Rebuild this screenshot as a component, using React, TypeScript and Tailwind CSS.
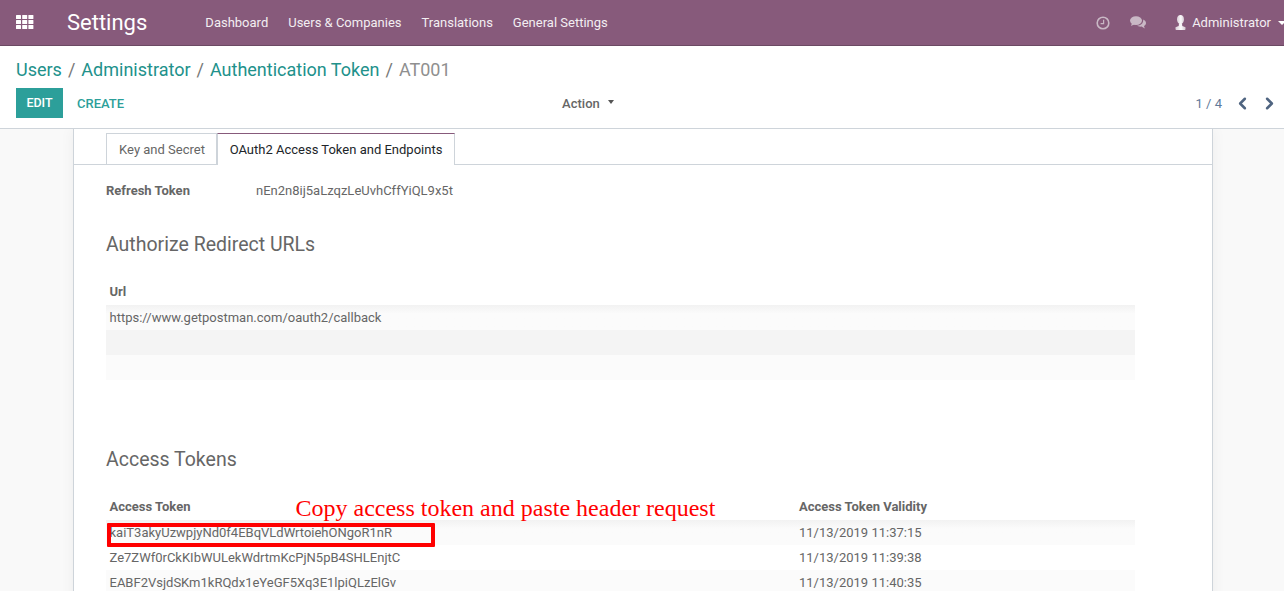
import React from "react";
import { ChevronLeft, ChevronRight } from "lucide-react";

const Grid = () => (
  <svg width="18" height="15" viewBox="0 0 18 15" fill="#fff">
    {[0, 5, 10].map((y) =>
      [0, 6.2, 12.4].map((x) => <rect key={`${x}-${y}`} x={x} y={y} width="5" height="4" rx="0.5" />)
    )}
  </svg>
);

const Clock = () => (
  <svg width="14" height="14" viewBox="0 0 14 14" fill="none" stroke="#c9b8c5" strokeWidth="1.6">
    <circle cx="7" cy="7" r="5.8" />
    <path d="M7.6 3.8V7.6H4.6" strokeWidth="1.2" />
  </svg>
);

const Chat = () => (
  <svg width="16" height="13" viewBox="0 0 16 13" fill="#c9b8c5">
    <ellipse cx="6" cy="4.6" rx="6" ry="4.4" />
    <path d="M2 7l-1 3 4-2z" />
    <path d="M13.2 3.6C15 4.4 16 5.6 16 7c0 1.2-.8 2.300-2 3l.8 2.600-3.300-2C9.500 10.800 8 10.400 7 9.800c3.500 0 6.600-2.300 6.200-6.200z" />
  </svg>
);

const Person = () => (
  <svg width="11" height="15" viewBox="0 0 11 15">
    <defs>
      <linearGradient id="bust" x1="0" y1="0" x2="1" y2="0">
        <stop offset="0" stopColor="#d9ced6" />
        <stop offset="0.55" stopColor="#fbfafb" />
        <stop offset="1" stopColor="#d4c8d1" />
      </linearGradient>
    </defs>
    <path d="M5.500 0C7.800 0 9 1.900 9 4.300 9 6.900 7.400 9.200 5.500 9.200S2 6.900 2 4.300C2 1.900 3.200 0 5.500 0z" fill="url(#bust)" />
    <path d="M4 8.600h3l.3 2.400 3.200 1.300V14c0 .6-.5 1-1 1h-8c-.5 0-1-.4-1-1v-1.700L3.700 11z" fill="url(#bust)" />
  </svg>
);

const Row = ({ tone, a, b }: { tone: string; a?: string; b?: string }) => (
  <div className={`flex h-[25px] items-center pl-[3.500px] ${tone}`}>
    <span className="w-[689.500px] shrink-0">{a}</span>
    <span>{b}</span>
  </div>
);

export default function App() {
  return (
    <div className="flex h-[591px] flex-col overflow-hidden bg-white font-['Roboto',sans-serif] text-[13px] text-[#4c4c4c]">
      <header className="flex h-[46px] shrink-0 items-center border-b border-[#6b4a63] bg-[#875a7b] text-white">
        <div className="ml-[16px] flex w-[51px] items-center"><Grid /></div>
        <span className="mr-[58px] text-[22px] leading-none">Settings</span>
        <nav className="flex gap-[20px] text-[13px] text-[#f3eef2]">
          <span>Dashboard</span>
          <span>Users &amp; Companies</span>
          <span>Translations</span>
          <span>General Settings</span>
        </nav>
        <div className="ml-auto -mr-[2px] flex items-center text-[#f3eef2]">
          <Clock />
          <span className="ml-[20px] mr-[29px]"><Chat /></span>
          <Person />
          <span className="ml-[6px] mr-[7px]">Administrator</span>
          <span className="h-0 w-0 border-x-[4px] border-t-[4px] border-x-transparent border-t-white" />
        </div>
      </header>

      <section className="h-[83px] shrink-0 border-b border-[#ced4da] pl-[16px]">
        <div className="flex h-[42px] items-end gap-[6px] pb-[5px] text-[18px] leading-[26px]">
          <span className="text-[#21918b]">Users</span>
          <span className="text-[#777]">/</span>
          <span className="text-[#21918b]">Administrator</span>
          <span className="text-[#777]">/</span>
          <span className="text-[#21918b]">Authentication Token</span>
          <span className="text-[#777]">/</span>
          <span className="text-[#8f8f8f]">AT001</span>
        </div>
        <div className="flex items-center">
          <span className="flex h-[30px] w-[47px] items-center justify-center bg-[#2c9f9a] pt-[1px] text-[12.500px] font-medium text-white">EDIT</span>
          <span className="ml-[14px] pt-[1px] text-[13px] font-medium text-[#2c9f9a]">CREATE</span>
          <span className="ml-[438px] pt-[1px] text-[13px] font-medium text-[#666]">Action</span>
          <span className="mb-[3px] ml-[8px] h-0 w-0 border-x-[3.500px] border-t-[4px] border-x-transparent border-t-[#555]" />
          <span className="ml-auto pt-[1px] text-[#5f7a99]">1 / 4</span>
          <ChevronLeft className="ml-[11px] text-[#4f6480]" size={19} strokeWidth={3.2} />
          <ChevronRight className="ml-[8px] mr-[5px] text-[#4f6480]" size={19} strokeWidth={3.2} />
        </div>
      </section>

      <main className="flex flex-1 overflow-hidden bg-[#f9f9f9] pl-[73px]">
        <div className="relative h-[600px] w-[1140px] shrink-0 border-x border-[#ced4da] bg-white shadow-[0_0_14px_rgba(0,0,0,0.05)]">
          <div className="flex h-[36px] items-end border-b border-[#ced4da] pl-[32px] pt-[4px]">
            <span className="-mb-px flex h-[32px] w-[111px] items-center justify-center border border-b-0 border-[#ced4da] pl-[1px] text-[#666]">Key and Secret</span>
            <span className="-mb-px flex h-[32px] w-[238px] items-center justify-center border border-b-0 border-[#ced4da] border-t-[#875a7b] bg-white text-[#212529]">OAuth2 Access Token and Endpoints</span>
          </div>

          <div className="pl-[32px] pr-[77px] text-[#666]">
            <div className="mt-[17px] flex leading-[17px]">
              <span className="w-[150px] shrink-0 font-bold">Refresh Token</span>
              <span>nEn2n8ij5aLzqzLeUvhCffYiQL9x5t</span>
            </div>

            <h2 className="mt-[33px] text-[19.500px] font-normal leading-[26px]">Authorize Redirect URLs</h2>

            <div className="mt-[24px] h-[21px] pl-[3.500px] font-bold leading-[20px]">Url</div>
            <div className="mt-[2px]">
              <Row tone="bg-gradient-to-b from-[#f2f2f2] to-[#fbfbfb] to-[35%]" a="https://www.getpostman.com/oauth2/callback" />
              <Row tone="bg-[#f4f4f4]" />
              <Row tone="bg-[#fbfbfb]" />
            </div>

            <h2 className="mt-[67px] text-[19.500px] font-normal leading-[26px]">Access Tokens</h2>

            <div className="mt-[24px] flex h-[21px] pl-[3.500px] font-bold leading-[20px]">
              <span className="w-[689.500px] shrink-0">Access Token</span>
              <span>Access Token Validity</span>
            </div>
            <div className="mt-[2px]">
              <Row tone="bg-gradient-to-b from-[#f2f2f2] to-[#fbfbfb] to-[35%]" a="kaiT3akyUzwpjyNd0f4EBqVLdWrtoiehONgoR1nR" b="11/13/2019 11:37:15" />
              <Row tone="bg-white" a="Ze7ZWf0rCkKIbWULekWdrtmKcPjN5pB4SHLEnjtC" b="11/13/2019 11:39:38" />
              <Row tone="bg-[#fbfbfb]" a="EABF2VsjdSKm1kRQdx1eYeGF5Xq3E1lpiQLzElGv" b="11/13/2019 11:40:35" />
            </div>
          </div>

          <span className="absolute left-[221.500px] top-[365px] whitespace-nowrap font-['Liberation_Serif',serif] text-[24px] leading-[28px] text-[#ff0000]">Copy access token and paste header request</span>
          <div className="absolute left-[33px] top-[394px] h-[24px] w-[328px] rounded-[1px] border-[4px] border-[#ff0000]" />
        </div>
      </main>
    </div>
  );
}
